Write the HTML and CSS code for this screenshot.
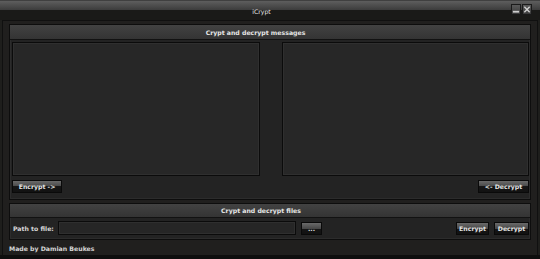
FILE: index.html
```html
<!DOCTYPE html>
<html>
<head>
<meta charset="utf-8">
<link rel="stylesheet" href="styles.css">
</head>
<body>
<div class="window">
  <div class="titlebar">
    <div class="title">iCrypt</div>
    <div class="controls">
      <span class="ctl"><svg width="9" height="9" viewBox="0 0 9 9"><rect x="1" y="6" width="7" height="2" fill="#cfcfcf"/></svg></span>
      <span class="ctl"><svg width="9" height="9" viewBox="0 0 9 9"><path d="M1.5 1.5 L7.5 7.5 M7.5 1.5 L1.5 7.5" stroke="#cfcfcf" stroke-width="1.6"/></svg></span>
    </div>
  </div>
  <div class="content">
    <section class="group group-msg">
      <div class="group-head">Crypt and decrypt messages</div>
      <div class="panes">
        <textarea class="pane"></textarea>
        <textarea class="pane"></textarea>
      </div>
      <div class="btn-row">
        <button class="btn btn-enc">Encrypt -&gt;</button>
        <button class="btn btn-dec">&lt;- Decrypt</button>
      </div>
    </section>
    <section class="group group-file">
      <div class="group-head">Crypt and decrypt files</div>
      <div class="file-row">
        <span class="label">Path to file:</span>
        <input class="path" type="text">
        <button class="btn btn-browse">...</button>
        <span class="spacer"></span>
        <button class="btn btn-fenc">Encrypt</button>
        <button class="btn btn-fdec">Decrypt</button>
      </div>
    </section>
    <div class="footer">Made by Damian Beukes</div>
  </div>
</div>
</body>
</html>
```
FILE: styles.css
```css
* { box-sizing: border-box; }
html, body { margin: 0; padding: 0; background: #0c0c0c; }
body { font-family: "DejaVu Sans", Verdana, sans-serif; font-size: 6.2px; color: #dcdcdc; }
.window {
  width: 540px; height: 259px; position: relative;
  background: #1e1e1c;
  display: flex; flex-direction: column;
  border-bottom: 4px solid #0e0e0e;
}
.titlebar {
  height: 20px; flex: none; position: relative;
  background: linear-gradient(to bottom, #222 0, #5e5e5e 1px, #3c3c3c 10px, #1a1a18 10px, #1a1a18 20px);
}
.title {
  padding: 8px 17px 0 0; text-align: center; line-height: 7px; color: #e4e4e4;
}
.controls { position: absolute; right: 8px; top: 4px; display: flex; gap: 1px; }
.ctl {
  width: 10px; height: 11px; display: flex; align-items: center; justify-content: center;
  background: linear-gradient(#5a5a5a, #3a3a3a); border: 1px solid #1a1a1a;
}
.content {
  flex: 1; display: flex; flex-direction: column;
  margin: 0 2px; padding: 3px 6px 0 6px;
  border-left: 1px solid #101010; border-right: 1px solid #101010; border-top: 1px solid #101010;
  background: #201f1e;
}
.group {
  border: 1px solid #0d0d0d;
  box-shadow: inset 0 0 0 1px #2c2c2c;
  background: #232323;
  display: flex; flex-direction: column;
}
.group-msg { height: 176px; }
.group-file { height: 37px; margin-top: 3px; }
.group-head {
  height: 15px; flex: none; line-height: 15px; text-align: center;
  background: linear-gradient(#424242, #343434);
  border-bottom: 1px solid #121212;
  color: #e6e6e6; font-weight: bold;
}
.group-msg .group-head { padding-right: 29px; }
.group-file .group-head { height: 14px; line-height: 14px; padding-right: 18px; }
.panes {
  display: grid; grid-template-columns: 248px 1fr; column-gap: 22px;
  padding: 2px 1px 0 2px;
}
.pane {
  height: 134px; resize: none; margin: 0; padding: 0;
  background: #272727; border: 1px solid #0b0b0b;
  box-shadow: inset 0 0 0 1px #2f2f2f;
  outline: none;
}
.btn-row { display: flex; justify-content: space-between; padding: 4px 1px 0 2px; }
.btn {
  font-family: "DejaVu Sans", Verdana, sans-serif; font-size: 6.2px; font-weight: bold;
  color: #e2e2e2; height: 13px; padding: 0; margin: 0;
  border: 1px solid #0a0a0a;
  background: linear-gradient(#6a6a6a 0, #484848 50%, #161616 50%, #121212 100%);
  line-height: 11px; text-align: center;
}
.btn-enc { width: 50px; }
.btn-dec { width: 51px; }
.file-row { display: flex; align-items: center; padding: 3px 1px 0 3px; }
.label { width: 45px; font-weight: bold; color: #d6d6d6; }
.path {
  width: 238px; height: 14px; margin: 0; padding: 0;
  background: #262626; border: 1px solid #0b0b0b; box-shadow: inset 0 0 0 1px #2f2f2f; outline: none;
}
.btn-browse { width: 21px; margin-left: 5px; }
.spacer { flex: 1; }
.btn-fenc { width: 33px; }
.btn-fdec { width: 35px; margin-left: 5px; }
.footer {
  padding: 5px 0 0 0; font-weight: bold; color: #d6d6d6; line-height: 7px;
}
```
